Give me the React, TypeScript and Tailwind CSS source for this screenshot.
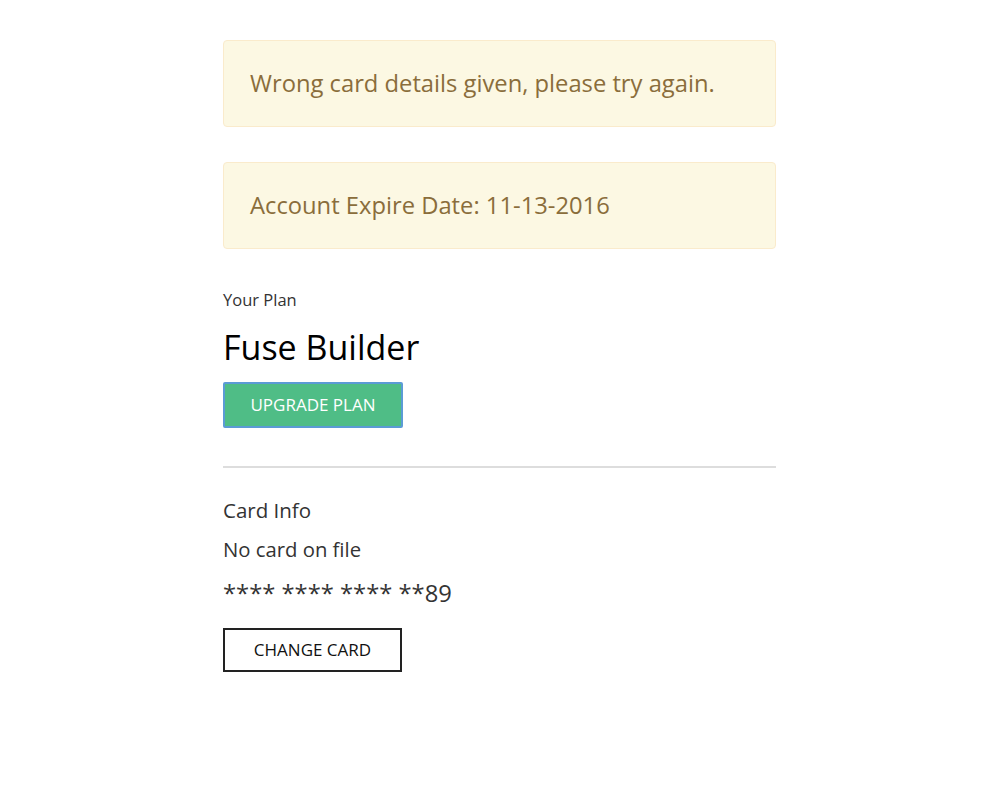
import React from "react";

export default function App() {
  return (
    <div className="min-h-[810px] w-full bg-white" style={{ fontFamily: '"Open Sans", sans-serif' }}>
      <div className="ml-[223px] w-[553px] pt-[40px]">
        <div className="flex h-[87px] items-center rounded-[4px] border border-[#faebcc] bg-[#fcf8e3] px-[26px] text-[23.75px] text-[#8a6d3b]">
          Wrong card details given, please try again.
        </div>
        <div className="mt-[35px] flex h-[87px] items-center rounded-[4px] border border-[#faebcc] bg-[#fcf8e3] px-[26px] text-[23.75px] text-[#8a6d3b]">
          Account Expire Date: 11-13-2016
        </div>
        <div className="mt-[40px] text-[16.5px] leading-[22px] text-[#333]">Your Plan</div>
        <div className="mt-[16px] text-[34px] leading-[40px] text-black">Fuse Builder</div>
        <button className="mt-[15px] flex h-[46px] w-[180px] items-center justify-center rounded-[2px] border-2 border-[#5b9bd5] bg-[#4fbd86] text-[17px] text-white">
          UPGRADE PLAN
        </button>
        <div className="mt-[38px] h-[2px] bg-[#dddddd]" />
        <div className="mt-[29px] text-[20.5px] leading-[26px] text-[#333]">Card Info</div>
        <div className="mt-[13px] text-[20.3px] leading-[26px] text-[#333]">No card on file</div>
        <div className="mt-[16px] text-[23.75px] leading-[30px] text-[#333]">**** **** **** **89</div>
        <button className="mt-[20px] flex h-[44px] w-[179px] items-center justify-center border-2 border-[#222] bg-white text-[17px] text-[#111]">
          CHANGE CARD
        </button>
      </div>
    </div>
  );
}
